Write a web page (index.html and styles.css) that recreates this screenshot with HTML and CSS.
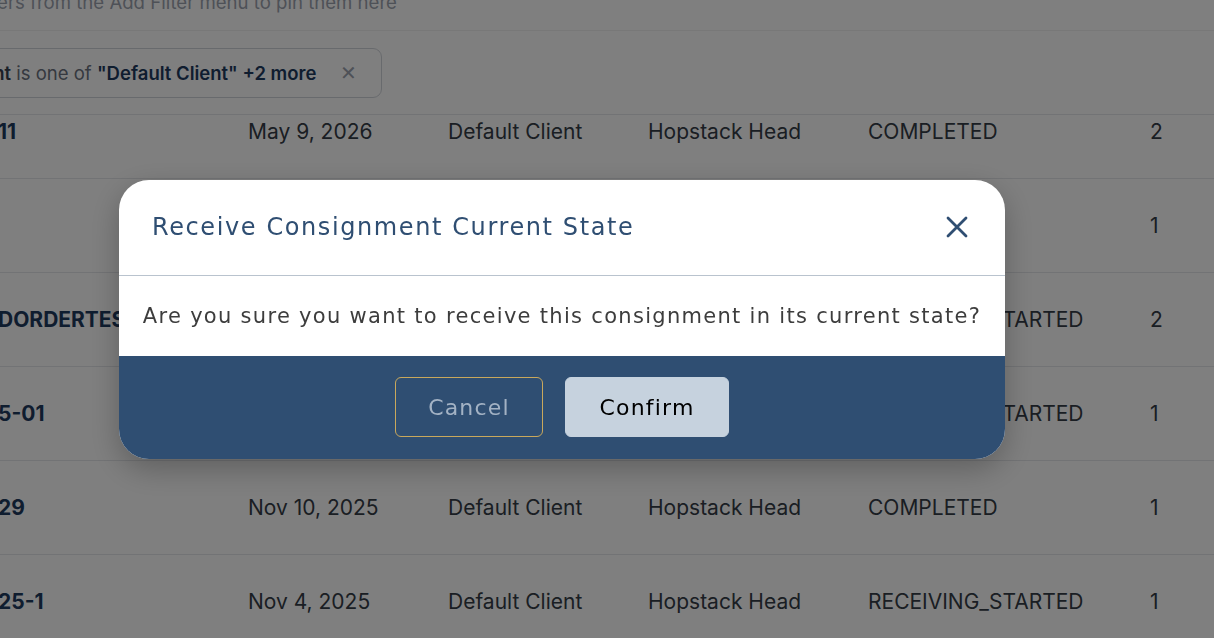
FILE: index.html
```html
<!DOCTYPE html>
<html lang="en">
<head>
    <meta charset="UTF-8">
    <meta name="viewport" content="width=device-width, initial-scale=1.0">
    <title>Consignments</title>
    <link rel="stylesheet" href="styles.css">
</head>
<body>
    <div class="page">
        <div class="filter-bar">
            <div class="hint">Select filters from the Add Filter menu to pin them here</div>
            <div class="chips">
                <div class="chip">
                    <span class="chip-text"><b class="chip-key">Client</b> is one of <b class="chip-value">"Default Client" +2 more</b></span>
                    <span class="chip-close">&#x2715;</span>
                </div>
            </div>
        </div>

        <div class="rows">
            <div class="row partial">
                <span class="cell id">11</span>
                <span class="cell">May 9, 2026</span>
                <span class="cell">Default Client</span>
                <span class="cell">Hopstack Head</span>
                <span class="cell">COMPLETED</span>
                <span class="cell">2</span>
            </div>
            <div class="row">
                <span class="cell id"></span>
                <span class="cell">May 2, 2026</span>
                <span class="cell">Default Client</span>
                <span class="cell">Hopstack Head</span>
                <span class="cell">COMPLETED</span>
                <span class="cell">1</span>
            </div>
            <div class="row">
                <span class="cell id">DORDERTEST</span>
                <span class="cell">Jan 12, 2026</span>
                <span class="cell">Default Client</span>
                <span class="cell">Hopstack Head</span>
                <span class="cell">RECEIVING_STARTED</span>
                <span class="cell">2</span>
            </div>
            <div class="row">
                <span class="cell id">5-01</span>
                <span class="cell">Dec 1, 2025</span>
                <span class="cell">Default Client</span>
                <span class="cell">Hopstack Head</span>
                <span class="cell">RECEIVING_STARTED</span>
                <span class="cell">1</span>
            </div>
            <div class="row">
                <span class="cell id">29</span>
                <span class="cell">Nov 10, 2025</span>
                <span class="cell">Default Client</span>
                <span class="cell">Hopstack Head</span>
                <span class="cell">COMPLETED</span>
                <span class="cell">1</span>
            </div>
            <div class="row">
                <span class="cell id">25-1</span>
                <span class="cell">Nov 4, 2025</span>
                <span class="cell">Default Client</span>
                <span class="cell">Hopstack Head</span>
                <span class="cell">RECEIVING_STARTED</span>
                <span class="cell">1</span>
            </div>
        </div>
    </div>

    <!-- confirm dialog -->
    <div class="modal-backdrop">
        <div class="modal">
            <div class="modal-header">
                <h2 class="modal-title">Receive Consignment Current State</h2>
                <svg class="modal-close" width="22" height="22" viewBox="0 0 22 22">
                    <path d="M2 2 L20 20 M20 2 L2 20" stroke="#2f4e72" stroke-width="2.8" stroke-linecap="round"/>
                </svg>
            </div>
            <div class="modal-body">
                Are you sure you want to receive this consignment in its current state?
            </div>
            <div class="modal-footer">
                <button class="btn btn-cancel">Cancel</button>
                <button class="btn btn-confirm">Confirm</button>
            </div>
        </div>
    </div>
</body>
</html>
```

FILE: styles.css
```css
body {
    margin: 0;
    background: #ffffff;
    font-family: Inter, 'Noto Sans', sans-serif;
    color: #374151;
    overflow: hidden;
}

.page {
    height: 100vh;
    overflow: hidden;
}

/* filter bar */
.filter-bar {
    height: 114px;
    border-bottom: 1px solid #e5e7eb;
}

.hint {
    height: 30px;
    margin-left: -85px;
    line-height: 4px;
    font-size: 18.6px;
    color: #9ca3af;
    border-bottom: 1px solid #f0f0f0;
    white-space: nowrap;
}

.chips {
    padding-top: 17px;
}

.chip {
    display: inline-flex;
    align-items: center;
    gap: 24px;
    height: 48px;
    margin-left: -54px;
    padding: 0 24px 0 12px;
    border: 1px solid #d1d5db;
    border-radius: 9px;
    font-size: 18.5px;
    color: #6b7280;
    white-space: nowrap;
}

.chip-key,
.chip-value {
    font-weight: 600;
}

.chip-key {
    color: #374151;
}

.chip-value {
    color: #1e3a5f;
}

.chip-close {
    color: #9ca3af;
    font-size: 20px;
}

/* table rows */
.row {
    display: grid;
    grid-template-columns: 248px 200px 200px 220px 282px 1fr;
    align-items: center;
    height: 93px;
    border-bottom: 1px solid #e5e7eb;
    font-size: 21px;
    color: #353c47;
    white-space: nowrap;
}

.row.partial {
    height: 63px;
    align-items: start;
}

.row.partial .cell {
    padding-top: 5px;
}

.cell {
    overflow: hidden;
    line-height: 24px;
}

.cell.id {
    font-weight: 700;
    color: #1e3a5f;
    text-indent: -2px;
}

/* modal */
.modal-backdrop {
    position: fixed;
    inset: 0;
    background: rgba(0, 0, 0, 0.5);
    display: flex;
    align-items: center;
    justify-content: center;
    padding-right: 90px;
}

.modal {
    width: 886px;
    background: #ffffff;
    border-radius: 30px;
    overflow: hidden;
    box-shadow: 0 10px 30px rgba(0, 0, 0, 0.25);
    font-family: 'DejaVu Sans', sans-serif;
}

.modal-header {
    display: flex;
    align-items: center;
    justify-content: space-between;
    height: 95px;
    padding: 0 37px 0 33px;
    border-bottom: 1px solid #b9c3ce;
}

.modal-title {
    margin: 0;
    font-size: 24px;
    font-weight: 400;
    letter-spacing: 1.6px;
    color: #2f4e72;
}

.modal-body {
    height: 80px;
    display: flex;
    align-items: center;
    justify-content: center;
    font-size: 21px;
    letter-spacing: 1.3px;
    color: #3d3d3d;
}

.modal-footer {
    height: 103px;
    background: #2f4e72;
    display: flex;
    align-items: center;
    justify-content: center;
    gap: 22px;
}

.btn {
    height: 60px;
    border-radius: 6px;
    font-family: 'DejaVu Sans', sans-serif;
    font-size: 22px;
    letter-spacing: 1.2px;
    cursor: pointer;
}

.btn-cancel {
    width: 148px;
    background: transparent;
    border: 1px solid #c9a85c;
    color: #a3b2c4;
}

.btn-confirm {
    width: 164px;
    background: #c6d2de;
    border: 1px solid #c6d2de;
    color: #000000;
}
```
